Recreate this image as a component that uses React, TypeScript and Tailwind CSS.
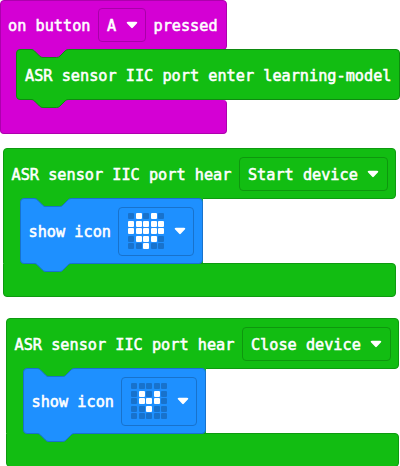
import type { ReactNode } from 'react';

const label =
  "whitespace-pre pt-[2px] font-['DejaVu_Sans_Mono',monospace] text-[15.22px] leading-5 text-white [-webkit-text-stroke:0.55px_white]";

function Caret() {
  return (
    <svg className="h-[8px] w-[12px] shrink-0" viewBox="0 0 12 8">
      <path d="M2 .8h8c1.4 0 1.6 1 .8 1.8L7 6.6c-.7.7-1.3.7-2 0L1.2 2.6C.4 1.8.6.8 2 .8Z" fill="#fff" />
    </svg>
  );
}

function Notch({ fill, stroke, className }: { fill: string; stroke: string; className: string }) {
  return (
    <svg className={`absolute h-[10px] w-[40px] ${className}`} viewBox="0 0 40 10">
      <path d="M0 0H40V.5H38.500C37 .5 36 1 35 2L30 7C29 8 28 8.500 26.500 8.500H13C11.500 8.500 10.500 8 9.500 7L4.500 2C3.500 1 2.500 .5 1 .5H0Z" fill={fill} />
      <path d="M0 .5H1C2.500 .5 3.500 1 4.500 2L9.500 7C10.500 8 11.500 8.500 13 8.500H26.500C28 8.500 29 8 30 7L35 2C36 1 37 .5 38.500 .5H40" fill="none" stroke={stroke} />
    </svg>
  );
}

function LedField({ rows }: { rows: string[] }) {
  return (
    <div className="ml-[7px] flex h-[49px] w-[76px] items-center rounded-[4px] border border-[#1872cc] pl-[9.300px]">
      <div className="grid grid-cols-5 gap-[1.500px]">
        {rows.join('').split('').map((c, i) => (
          <span key={i} className={`size-[6px] rounded-[1px] ${c === '#' ? 'bg-white' : 'bg-[#1872cc]'}`} />
        ))}
      </div>
      <div className="ml-[9.500px] flex"><Caret /></div>
    </div>
  );
}

function HearBlock({ value, rows, className }: { value: string; rows: string[]; className: string }) {
  return (
    <section className={`w-[393px] ${className}`}>
      <div className="flex h-[51px] items-center rounded-t-[4px] rounded-br-[4px] border border-[#0e9a10] bg-[#12bd12] pl-[7.500px]">
        <span className={label}>ASR sensor IIC port hear</span>
        <div className="ml-[7.500px] flex h-[34px] w-[149px] items-center rounded-[4px] border border-[#0e970e] pl-[8px]">
          <span className={label}>{value}</span>
          <div className="ml-[9px] flex"><Caret /></div>
        </div>
      </div>
      <div className="-mt-px flex h-[65px] w-[200px] border-l border-[#0e9a10] bg-[#12bd12] pl-[15.500px]">
        <div className="relative flex h-[66px] w-[183.500px] shrink-0 items-center rounded-[4px] border border-[#1872cc] bg-[#1e90ff] pl-[8px]">
          <Notch fill="#12bd12" stroke="#1872cc" className="-top-px left-[12px]" />
          <span className={label}>show icon</span>
          <LedField rows={rows} />
          <Notch fill="#1e90ff" stroke="#1872cc" className="top-[64px] left-[12px] z-10" />
        </div>
      </div>
      <div className="h-[34px] rounded-b-[4px] rounded-tr-[4px] border border-[#0e9a10] bg-[#12bd12]">
        <div className="-mt-px h-px w-[20px] bg-[#12bd12]" />
      </div>
    </section>
  );
}

function EventBlock({ children }: { children: ReactNode }) {
  return (
    <section className="h-[134px] w-[227px]">
      <div className="flex h-[50px] items-center rounded-t-[4px] rounded-br-[4px] border border-[#ad00ad] bg-[#d400d4] pl-[7px]">
        <span className={label}>on button</span>
        <div className="ml-[8px] flex h-[34px] w-[48px] items-center rounded-[4px] border border-[#a900a9] pl-[7.500px]">
          <span className={label}>A</span>
          <div className="ml-[9.500px] flex"><Caret /></div>
        </div>
        <span className={`${label} ml-[7px]`}>pressed</span>
      </div>
      <div className="-mt-px flex h-[51px] border-l border-[#ad00ad] bg-[#d400d4] pl-[15px]">{children}</div>
      <div className="h-[34px] rounded-b-[4px] rounded-tr-[4px] border border-t-0 border-[#ad00ad] bg-[#d400d4]" />
    </section>
  );
}

export default function App() {
  return (
    <main className="h-[466px] w-[400px] overflow-hidden bg-white">
      <EventBlock>
        <div className="relative flex h-[51px] w-[384px] shrink-0 items-center rounded-[4px] border border-[#0e8a10] bg-[#12bd12] pl-[8px]">
          <Notch fill="#d400d4" stroke="#0e8a10" className="-top-px left-[13px]" />
          <span className={label}>ASR sensor IIC port enter learning-model</span>
          <Notch fill="#12bd12" stroke="#0e8a10" className="top-[49px] left-[13px] z-10" />
        </div>
      </EventBlock>
      <HearBlock value="Start device" rows={['.#.#.', '#####', '#####', '.###.', '..#..']} className="mt-[14px] ml-[3px]" />
      <HearBlock value="Close device" rows={['.....', '.#.#.', '.###.', '..#..', '.....']} className="mt-[21px] ml-[6px]" />
    </main>
  );
}
